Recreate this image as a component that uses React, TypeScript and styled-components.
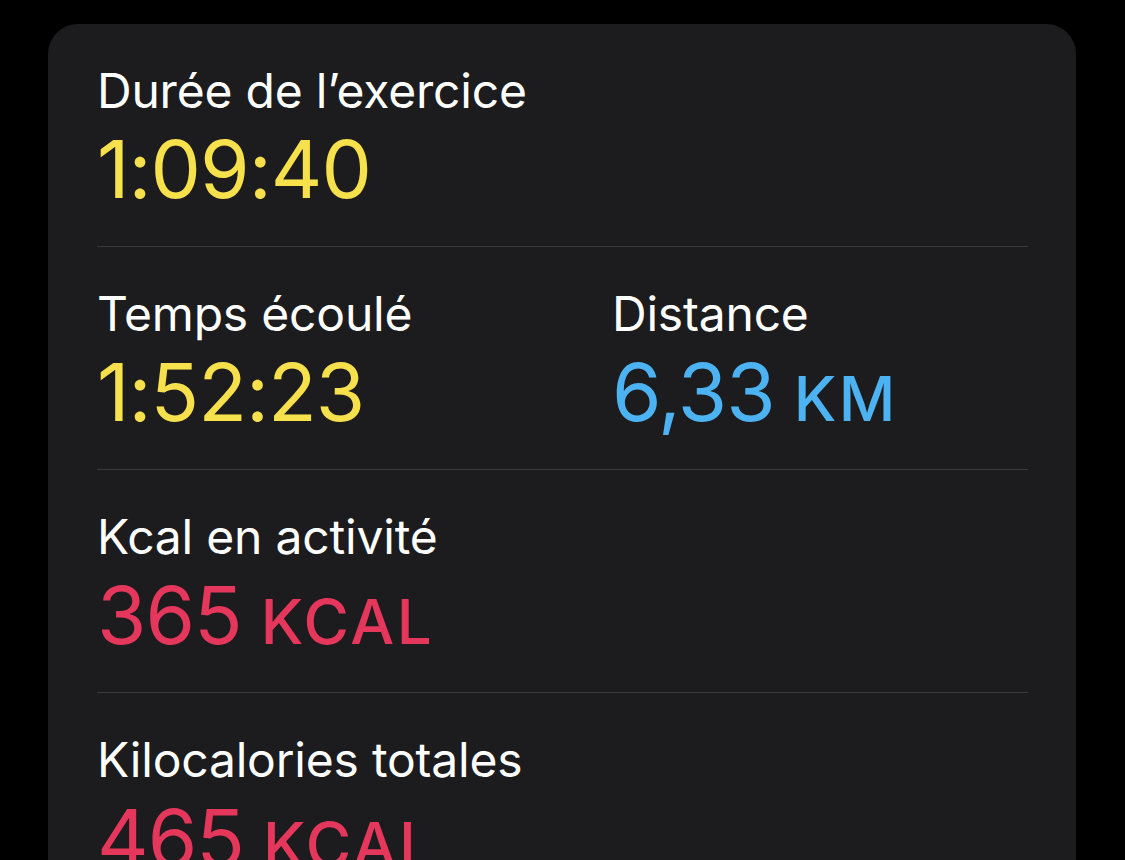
import React from "react";
import styled, { createGlobalStyle } from "styled-components";

const Global = createGlobalStyle`
  html, body {
    margin: 0;
    padding: 0;
    background: #000000;
    overflow: hidden;
  }
  body {
    font-family: Inter, "Noto Sans", "Liberation Sans", sans-serif;
    -webkit-font-smoothing: antialiased;
  }
`;

const Page = styled.div`
  width: 1125px;
  height: 860px;
  background: #000000;
  padding: 24px 49px 0 48px;
  box-sizing: border-box;
  overflow: hidden;
`;

const Card = styled.div`
  background: #1c1c1e;
  border-radius: 30px;
  padding: 0 48px 0 49px;
  min-height: 900px;
`;

const Section = styled.div<{ $last?: boolean }>`
  display: grid;
  grid-template-columns: 515px 1fr;
  padding: 40px 0 32px;
  border-bottom: ${(p) => (p.$last ? "none" : "1px solid #3a3a3c")};
`;

const Metric = styled.div`
  display: flex;
  flex-direction: column;
  gap: 6px;
`;

const Label = styled.div`
  color: #ffffff;
  font-size: 48px;
  line-height: 54px;
  font-weight: 400;
  letter-spacing: -0.2px;
  white-space: nowrap;
`;

const Value = styled.div<{ $color: string }>`
  color: ${(p) => p.$color};
  font-size: 80px;
  line-height: 90px;
  height: 90px;
  font-weight: 400;
  letter-spacing: -1px;
  white-space: nowrap;
`;

const Unit = styled.span`
  font-size: 62px;
  line-height: 0;
  font-weight: 500;
  letter-spacing: 2.5px;
  margin-left: 19px;
`;

const YELLOW = "#f6e04c";
const BLUE = "#4cb2f1";
const RED = "#e5375b";

type M = { label: string; value: string; unit?: string; color: string };

const rows: M[][] = [
  [{ label: "Durée de l’exercice", value: "1:09:40", color: YELLOW }],
  [
    { label: "Temps écoulé", value: "1:52:23", color: YELLOW },
    { label: "Distance", value: "6,33", unit: "KM", color: BLUE },
  ],
  [{ label: "Kcal en activité", value: "365", unit: "KCAL", color: RED }],
  [{ label: "Kilocalories totales", value: "465", unit: "KCAL", color: RED }],
];

export default function App() {
  return (
    <>
      <Global />
      <Page>
        <Card>
          {rows.map((row, i) => (
            <Section key={i} $last={i === rows.length - 1}>
              {row.map((m) => (
                <Metric key={m.label}>
                  <Label>{m.label}</Label>
                  <Value $color={m.color}>
                    {m.value}
                    {m.unit && <Unit>{m.unit}</Unit>}
                  </Value>
                </Metric>
              ))}
            </Section>
          ))}
        </Card>
      </Page>
    </>
  );
}
